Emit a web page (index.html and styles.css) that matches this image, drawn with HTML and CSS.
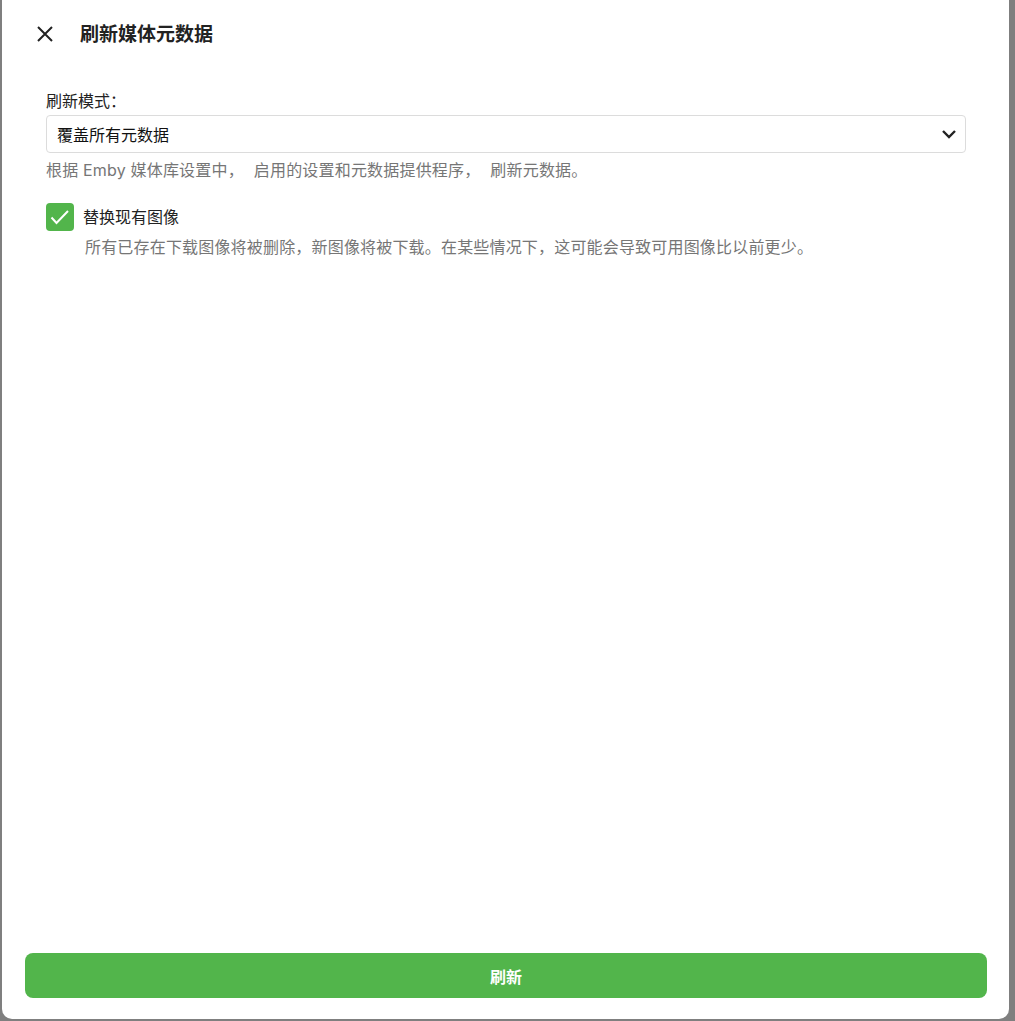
FILE: index.html
```html
<!DOCTYPE html>
<html lang="zh-CN">
<head>
<meta charset="utf-8">
<title>刷新媒体元数据</title>
<link rel="stylesheet" href="styles.css">
</head>
<body>
<div class="dialog">
  <div class="header">
    <svg class="close" width="18" height="18" viewBox="0 0 18 18"><path d="M2 2L16 16M16 2L2 16" stroke="#222" stroke-width="2" fill="none"/></svg>
    <h1 class="title">刷新媒体元数据</h1>
  </div>
  <div class="content">
    <div class="label">刷新模式：</div>
    <div class="select">
      <span>覆盖所有元数据</span>
      <svg class="chev" width="16" height="10" viewBox="0 0 16 10"><path d="M2 2L8 8L14 2" stroke="#222" stroke-width="2.4" fill="none"/></svg>
    </div>
    <div class="desc">根据 Emby 媒体库设置中<span class="punct">，</span>启用的设置和元数据提供程序<span class="punct">，</span>刷新元数据。</div>
    <div class="check-row">
      <span class="box"><svg width="28" height="28" viewBox="0 0 28 28"><path d="M5.5 14.5L10.5 20L22 8" stroke="#fff" stroke-width="2" fill="none"/></svg></span>
      <span class="check-label">替换现有图像</span>
    </div>
    <div class="desc check-desc">所有已存在下载图像将被删除，新图像将被下载。在某些情况下，这可能会导致可用图像比以前更少。</div>
  </div>
  <div class="footer">
    <button class="btn">刷新</button>
  </div>
</div>
</body>
</html>
```

FILE: styles.css
```css
html, body {
  margin: 0;
  padding: 0;
  height: 100%;
}
body {
  background: #7f7f7f;
  font-family: Inter, "Noto Sans CJK SC", sans-serif;
  color: #222;
  overflow: hidden;
}
.dialog {
  margin-left: 2px;
  width: 1007px;
  height: 1019px;
  background: #fff;
  border-radius: 0 0 10px 10px;
  display: flex;
  flex-direction: column;
  box-sizing: border-box;
}
.header {
  height: 68px;
  display: flex;
  align-items: center;
  padding-left: 34px;
  gap: 26px;
}
.close {
  display: block;
}
.title {
  margin: 0;
  font-size: 19px;
  font-weight: 700;
  line-height: 1;
  color: #222;
}
.content {
  flex: 1;
  padding: 22px 43px 0 44px;
}
.label {
  font-size: 16px;
  line-height: 22px;
  margin-bottom: 3px;
  color: #222;
}
.select {
  height: 38px;
  box-sizing: border-box;
  border: 1px solid #dcdcdc;
  border-radius: 4px;
  display: flex;
  align-items: center;
  justify-content: space-between;
  padding: 0 8px 0 10px;
  font-size: 16px;
  color: #111;
}
.chev {
  display: block;
}
.desc {
  font-size: 16px;
  line-height: 22px;
  color: #767676;
  margin-top: 6px;
  letter-spacing: 0.18px;
}
.punct {
  margin-right: 10px;
}
.check-row {
  display: flex;
  align-items: center;
  gap: 9px;
  margin-top: 22px;
}
.box {
  width: 28px;
  height: 28px;
  border-radius: 4px;
  background: #52b54b;
  display: block;
}
.box svg {
  display: block;
}
.check-label {
  font-size: 16px;
  line-height: 22px;
  color: #222;
}
.check-desc {
  margin-top: 5px;
  padding-left: 39px;
}
.footer {
  padding: 0 22px 21px 23px;
}
.btn {
  display: block;
  width: 100%;
  height: 45px;
  border: none;
  border-radius: 8px;
  background: #52b54b;
  color: #fff;
  font-family: Inter, "Noto Sans CJK SC", sans-serif;
  font-size: 16px;
  font-weight: 700;
  padding: 0;
}
```
